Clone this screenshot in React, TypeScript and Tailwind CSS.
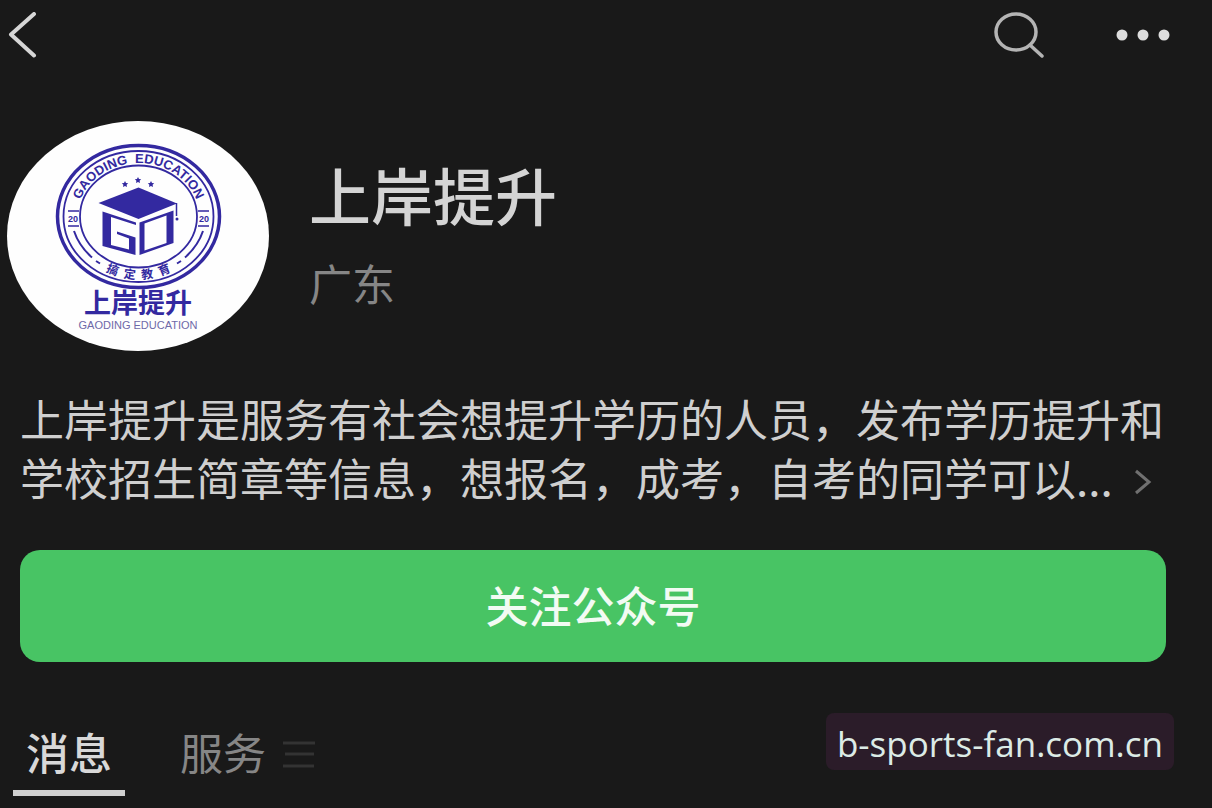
import { useId } from "react";

const INTRO =
  "上岸提升是服务有社会想提升学历的人员，发布学历提升和学校招生简章等信息，想报名，成考，自考的同学可以...";

const TABS = [
  { id: "messages", label: "消息" },
  { id: "services", label: "服务" },
];

function Logo() {
  const top = useId();
  const bottom = useId();

  return (
    <svg
      viewBox="7 121 262 230"
      role="img"
      aria-label="上岸提升"
      className="w-[262px] shrink-0"
      fontFamily='"Liberation Sans", "Noto Sans CJK SC", sans-serif'
      fill="#3329a0"
    >
      <defs>
        <path id={top} d="M 77.5 216.5 A 61 53.5 0 0 1 199.5 216.5" />
        <path id={bottom} d="M 70.5 216.5 A 68 62.5 0 0 0 206.5 216.5" />
      </defs>
      <ellipse cx="138" cy="236" rx="131" ry="115" fill="#fefefe" />

      {/* rings */}
      <g fill="none" stroke="#3329a0">
        <ellipse cx="138.5" cy="216.5" rx="81" ry="71" strokeWidth="3.5" />
        <ellipse cx="138.5" cy="216.5" rx="75" ry="65.5" strokeWidth="1.8" />
        <ellipse cx="138.5" cy="216.5" rx="58.5" ry="51" strokeWidth="1.8" />
        <path d="M 74 231 Q 79 246 92 257.5 M 203 231 Q 198 246 185 257.5" strokeWidth="2" />
        <path d="M 96 261 l 4 2.5 M 181 261 l -4 2.5" strokeWidth="2" />
        <path d="M 68 211 h 11 M 68 226 h 11 M 198 211 h 11 M 198 226 h 11" strokeWidth="1.4" />
      </g>

      <text fontSize="13" fontWeight="bold">
        <textPath href={`#${top}`} startOffset="50%" textAnchor="middle">
          {"GAODING\u00a0\u00a0EDUCATION"}
        </textPath>
      </text>
      <text fontSize="12" fontWeight="bold">
        <textPath href={`#${bottom}`} startOffset="50%" textAnchor="middle">
          {"搞\u00a0\u00a0定\u00a0\u00a0教\u00a0\u00a0育"}
        </textPath>
      </text>
      <text x="73" y="222" fontSize="9" fontWeight="bold" textAnchor="middle">20</text>
      <text x="204" y="222" fontSize="9" fontWeight="bold" textAnchor="middle">20</text>

      {/* stars */}
      <path d="M125 181l1 2 2.200.300-1.600 1.500.400 2.200-2-1-2 1 .400-2.200-1.600-1.500 2.200-.300z" />
      <path d="M138 177l1 2 2.200.300-1.600 1.500.400 2.200-2-1-2 1 .400-2.200-1.600-1.500 2.200-.300z" />
      <path d="M151 181l1 2 2.200.300-1.600 1.500.400 2.200-2-1-2 1 .400-2.200-1.600-1.500 2.200-.300z" />

      {/* mortarboard over the open cube */}
      <path d="M98.500 203L138.500 187.500L177 203.500L138.500 219z" />
      <path d="M176.500 203v13" fill="none" stroke="#3329a0" strokeWidth="1.5" />
      <circle cx="177" cy="219" r="1.500" />
      <path d="M102.500 211.500L136 222.500V225L111 217V245L129 249.500V238.500L117 234V231.500L135.500 237.500V255L102.500 246z" />
      <path
        fillRule="evenodd"
        d="M139.500 222.500L173.500 210.500V243L139.500 255zM144.500 223.500V250.500L166.500 243V215.500z"
      />

      <text x="138" y="313" fontSize="27" fontWeight="bold" textAnchor="middle">上岸提升</text>
      <text x="138" y="329" fontSize="11" textAnchor="middle" fill="#6f69a8">GAODING EDUCATION</text>
    </svg>
  );
}

function Header() {
  return (
    <header className="flex items-center justify-between pl-2 pr-10 pt-3">
      <button type="button" aria-label="返回">
        <svg viewBox="0 0 30 46" className="h-[46px] w-[30px]" fill="none" stroke="#d6d6d6" strokeWidth="4" strokeLinecap="round" strokeLinejoin="round">
          <path d="M26 2L3 22.500L26 43.500" />
        </svg>
      </button>
      <div className="flex items-center gap-[70px]">
        <button type="button" aria-label="搜索">
          <svg viewBox="0 0 52 46" className="h-[46px] w-[52px]" fill="none" stroke="#b4b4b4" strokeWidth="3.500" strokeLinecap="round">
            <ellipse cx="22" cy="20" rx="20" ry="18" />
            <path d="M36 33L48 44" />
          </svg>
        </button>
        <button type="button" aria-label="更多">
          <svg viewBox="0 0 56 12" className="h-3 w-14" fill="#dcdcdc">
            <circle cx="6" cy="6" r="5.500" />
            <circle cx="27" cy="6" r="5.500" />
            <circle cx="48" cy="6" r="5.500" />
          </svg>
        </button>
      </div>
    </header>
  );
}

export default function App() {
  return (
    <div className="relative flex min-h-screen flex-col bg-[#191919] font-['Noto_Sans_CJK_SC',sans-serif] text-[#cfcfcf]">
      <Header />

      <section className="mt-[63px] flex items-center gap-10 pl-[7px]">
        <Logo />
        <div className="pb-2">
          <h1 className="text-[62px] font-medium leading-[80px] text-[#d4d4d4]">上岸提升</h1>
          <p className="mt-5 text-[43px] leading-[56px] text-[#868686]">广东</p>
        </div>
      </section>

      <section className="relative mt-[38px] pl-5 pr-11">
        <p className="break-all text-[44px] leading-[59px]">{INTRO}</p>
        <button type="button" aria-label="展开" className="absolute bottom-3 right-[60px]">
          <svg viewBox="0 0 18 26" className="h-[26px] w-[18px]" fill="none" stroke="#707070" strokeWidth="3">
            <path d="M2 2L15 13L2 24" />
          </svg>
        </button>
      </section>

      <div className="mt-[43px] pl-5 pr-[46px]">
        <button
          type="button"
          className="h-28 w-full rounded-[20px] bg-[#48c464] pb-1 text-[43px] font-medium text-[#f2fbf3]"
        >
          关注公众号
        </button>
      </div>

      <nav className="mt-[58px] flex items-start pl-[13px]">
        {TABS.map((tab, i) => (
          <button
            key={tab.id}
            type="button"
            className={
              i === 0
                ? "border-b-[6px] border-[#d0d0d0] px-[13px] pb-2 text-[43px] font-medium leading-[62px] text-[#d8d8d8]"
                : "ml-[42px] px-[13px] text-[43px] leading-[62px] text-[#868686]"
            }
          >
            {tab.label}
          </button>
        ))}
        <button type="button" aria-label="菜单" className="mt-5 ml-0.5">
          <svg viewBox="0 0 34 30" className="h-[30px] w-[34px]" stroke="#333333" strokeWidth="3">
            <path d="M2 3H34M4 14H33M2 26H33" />
          </svg>
        </button>
      </nav>

      <div className="absolute bottom-[38px] right-[38px] rounded-lg bg-[#2b1c29] px-[11px] pt-1 font-['Open_Sans',sans-serif] text-[35px] leading-[53px] text-[#dcebe6]">
        b-sports-fan.com.cn
      </div>
    </div>
  );
}
